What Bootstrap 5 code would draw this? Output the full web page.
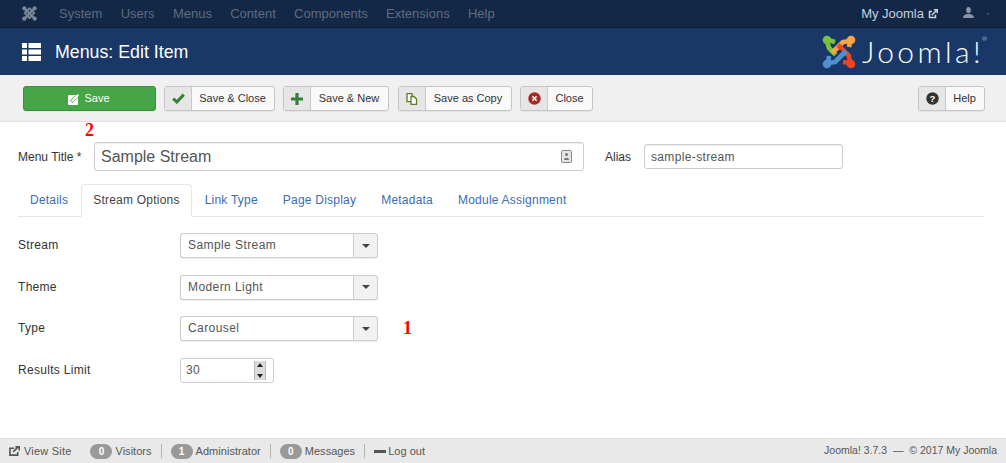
<!DOCTYPE html>
<html lang="en">
<head>
<meta charset="utf-8">
<title>Menus: Edit Item</title>
<link href="https://cdn.jsdelivr.net/npm/bootstrap@5.3.0/dist/css/bootstrap.min.css" rel="stylesheet">
<style>
html,body{height:100%;overflow:hidden}
body{font-family:"Liberation Sans",Arial,sans-serif;font-size:12px;color:#333;background:#fff;position:relative;display:flex;flex-direction:column}
.topbar{height:28px;background:#132746;border-bottom:1px solid #0d1c33;padding-left:22px;flex:none}
.topbar a{color:#5f6c80;font-size:13px;text-decoration:none;line-height:27px}
.topnav{gap:18.3px;margin-left:22px}
.mysite{color:#c8d1dd!important}
.usericon{margin-left:25px;margin-bottom:3px}
.usercaret{margin:0 16px 0 12px;border-top:2px solid #44516a;border-left:2.5px solid transparent;border-right:2.5px solid transparent;display:block}
.headbar{height:47px;background:#1a3867;color:#fff;padding-left:22px;padding-right:22px;flex:none}
.headbar h1{font-size:17.8px;font-weight:400;margin:1px 0 0 14px;line-height:47px}
.wordmark{font-family:Lato,"Liberation Sans",sans-serif;font-weight:300;font-size:30px;color:#fff;line-height:47px;margin-left:6px;letter-spacing:3.4px;position:relative}
.wordmark sup{font-size:6px;position:absolute;top:11px;right:-3px;letter-spacing:0}
.toolrow{height:47px;background:#f0f0f0;border-bottom:1px solid #e1e1e1;padding:11px 21px 0 23px;gap:8px;flex:none}
.tbtn{height:25px;padding:0;border:1px solid #c5c5c5;border-radius:3px;background:#f9f9f9;color:#333;font-size:11px;display:inline-flex;align-items:stretch;box-shadow:0 1px 1px rgba(0,0,0,.05)}
.tbtn:hover{background:#f9f9f9}
.ticon{width:27px;background:#e6e6e6;border-right:1px solid #c9c9c9;display:flex;align-items:center;justify-content:center;border-radius:2px 0 0 2px;flex:none}
.tlabel{display:flex;align-items:center;justify-content:center;flex:1;padding-right:1px}
.savebtn{width:133px;background:#46a546;border-color:#3b8f3b;color:#fff;justify-content:center;align-items:center;gap:4px;padding-right:1px}
.savebtn:hover{background:#46a546;color:#fff}
.w-sc{width:111px}.w-sn{width:106px}.w-sa{width:114px;margin-left:1px}.w-cl{width:73px}.w-he{width:67px}
.formwrap{padding:20px 22px 0 18px;flex:1 1 auto;min-height:0}
.toprow{height:29px;margin-bottom:13px}
.lbl-title{width:76px;flex:none}
.titlebox{width:490px;height:29px;flex:none;position:relative}
.titlebox input{height:29px;font-size:16px;padding:0 6px;border:1px solid #ccc;border-radius:3px;color:#555;font-family:inherit;box-shadow:inset 0 1px 1px rgba(0,0,0,.075)}
.titlebox svg{position:absolute;right:12px;top:8px}
.lbl-alias{margin-left:21px;width:39px;flex:none}
.aliasbox{width:199px;height:25px;font-size:12px;letter-spacing:.35px;padding:0 6px;border:1px solid #ccc;border-radius:3px;color:#555;font-family:inherit;box-shadow:inset 0 1px 1px rgba(0,0,0,.075)}
.tabline{border-bottom:1px solid #e6e6e6;height:33px;gap:0;--bs-nav-tabs-border-color:#e6e6e6}
.tabline .nav-link{font-size:12px;letter-spacing:.22px;color:#3b6cb4;padding:0 11px;height:33px;line-height:30px;border-radius:4px 4px 0 0;margin-right:1px}
.tabline .nav-link.active{color:#444;border-color:#e6e6e6 #e6e6e6 #fff}
.fieldrow{height:25px;margin-top:16.67px}
.tabline + .fieldrow{margin-top:16px}
.fieldlbl{width:162px;flex:none;font-size:12px;letter-spacing:.3px;margin-top:-1px}
.combo{width:198px;height:25px;flex:none}
.comboval{border:1px solid #ccc;border-right:0;border-radius:3px 0 0 3px;flex:1;padding:0 7px;line-height:23px;color:#555;letter-spacing:.42px;background:#fff;box-shadow:0 1px 1px rgba(0,0,0,.08)}
.combocaret{width:25px;background:#f2f2f2;border:1px solid #ccc;border-radius:0 3px 3px 0;display:flex;align-items:center;justify-content:center;box-shadow:0 1px 1px rgba(0,0,0,.08)}
.combocaret i{border-top:4px solid #444;border-left:4px solid transparent;border-right:4px solid transparent;display:block}
.numbox{width:94px;height:25px;border:1px solid #ccc;border-radius:3px;padding:0 7px 0 5px;color:#555;letter-spacing:.3px}
.spin{width:12px;height:19px;flex:none;background:#dcdcdc;display:flex;flex-direction:column;justify-content:space-between;align-items:center;padding:2px 0;border:1px solid #bbb;border-width:0 1px}
.spin b{display:block;border-left:3px solid transparent;border-right:3px solid transparent}
.spin b:first-child{border-bottom:4px solid #222}
.spin b:last-child{border-top:4px solid #222}
.footbar{height:25px;background:#e9e9e9;border-top:1px solid #dcdcdc;flex:none;font-size:11px;padding:0 9px 0 9px;color:#555;letter-spacing:.03px}
.footbar a{color:#555;text-decoration:none}
.viewsite{letter-spacing:.2px}
.cnt{background:#999;color:#fff;font-size:10px;font-weight:700;border-radius:9px;width:22px;height:15px;line-height:15px;text-align:center;padding:0;margin-right:3px;letter-spacing:0}
.sepbar{width:1px;height:14px;background:#b5b5b5;margin:0 9px}
.gapfirst{width:19px;flex:none}
.logoutdash{width:12px;height:3px;background:#555;margin-right:2px}
.foot-right{font-size:10.5px;letter-spacing:0;color:#555}
.anno{position:absolute;color:#f00;font-family:"Liberation Serif",serif;font-weight:700;line-height:1}
.anno2{left:85px;top:121px;font-size:18px}
.anno1{left:403px;top:319px;font-size:18px}
</style>
</head>
<body>
<nav class="topbar d-flex align-items-center">
  <svg width="15" height="15" viewBox="0 0 32 32" fill="none" stroke="#7b8798" stroke-width="5"><path d="M7 7 L25 25M25 7 L7 25"/><circle cx="5" cy="5" r="4.5" fill="#7b8798" stroke="none"/><circle cx="27" cy="5" r="4.5" fill="#7b8798" stroke="none"/><circle cx="5" cy="27" r="4.5" fill="#7b8798" stroke="none"/><circle cx="27" cy="27" r="4.5" fill="#7b8798" stroke="none"/><path d="M6 15 L16 5 L26 15 L16 26Z" stroke-width="4"/></svg>
  <div class="d-flex topnav">
    <a href="#">System</a><a href="#">Users</a><a href="#">Menus</a><a href="#">Content</a><a href="#">Components</a><a href="#">Extensions</a><a href="#">Help</a>
  </div>
  <div class="ms-auto d-flex align-items-center">
    <a href="#" class="mysite d-flex align-items-center">My Joomla<svg class="ms-1" width="10" height="10" viewBox="0 0 12 12" fill="none" stroke="#c8d1dd" stroke-width="1.8"><path d="M9 7v3.2H1.800V3H5"/><path d="M4.500 7.500 10.500 1.500M7 1h4.200v4.200"/></svg></a>
    <svg width="11" height="11" viewBox="0 0 12 12" fill="#8a94a5" class="usericon"><ellipse cx="6" cy="3.400" rx="2.600" ry="3.400"/><path d="M0 12c0-3 2-3.600 4.500-4.500h3C10 8.400 12 9 12 12z"/></svg>
    <span class="usercaret"></span>
  </div>
</nav>
<header class="headbar d-flex align-items-center">
  <svg width="19" height="18" viewBox="0 0 19 18" fill="#fff"><path d="M0 0h5v5H0zM6.500 0H19v5H6.500zM0 6.500h5v5H0zM6.500 6.500H19v5H6.500zM0 13h5v5H0zM6.500 13H19v5H6.500z"/></svg>
  <h1>Menus: Edit Item</h1>
  <div class="ms-auto d-flex align-items-center">
    <svg width="34" height="34" viewBox="0 0 34 34" fill="none" stroke-width="4.600" stroke-linejoin="round">
      <g stroke="#7ac143"><path d="M5 6 L7 13 L17 23"/><path d="M6 5 L13 7"/></g><circle cx="5" cy="5" r="4.300" fill="#7ac143"/>
      <g stroke="#f9a541"><path d="M28 6 L21 7 L10 18"/><path d="M28 6 L27 12"/></g><circle cx="29" cy="5" r="4.300" fill="#f9a541"/>
      <g stroke="#f44321"><path d="M28 28 L27 21 L16 10"/><path d="M28 28 L21 27"/></g><circle cx="29" cy="29" r="4.300" fill="#f44321"/>
      <g stroke="#1a3867" stroke-width="6.500"><path d="M12 26 L21 17"/></g>
      <g stroke="#5091cd"><path d="M6 28 L13 27 L24 16"/><path d="M6 28 L7 21"/></g><circle cx="5" cy="29" r="4.300" fill="#5091cd"/>
    </svg>
    <span class="wordmark">Joomla!<sup>®</sup></span>
  </div>
</header>
<div class="toolrow d-flex">
  <button class="btn tbtn savebtn"><svg width="12" height="12" viewBox="0 0 12 12"><rect x="0" y="2" width="10" height="10" rx="1" fill="#fff"/><path d="M3 9 8.500 3.500" stroke="#46a546" stroke-width="3.200" fill="none"/><path d="M3 9.200l.4-2L9.500 1l1.600 1.600L5 8.800z" fill="#fff"/></svg><span>Save</span></button>
  <button class="btn tbtn w-sc"><span class="ticon"><svg width="13" height="11" viewBox="0 0 13 11" fill="none" stroke="#378137" stroke-width="3"><path d="M1.200 5.500 4.800 9 11.800 1.600"/></svg></span><span class="tlabel">Save &amp; Close</span></button>
  <button class="btn tbtn w-sn"><span class="ticon"><svg width="12" height="12" viewBox="0 0 12 12" fill="#378137"><path d="M4.400 0h3.200v4.400H12v3.200H7.600V12H4.400V7.600H0V4.400h4.400z"/></svg></span><span class="tlabel">Save &amp; New</span></button>
  <button class="btn tbtn w-sa"><span class="ticon"><svg width="12" height="12" viewBox="0 0 12 12" fill="#fff" stroke="#5b7a22" stroke-width="1.300"><path d="M1 .7h5v8H1z"/><path d="M5 3.500h3l2.500 2.500v5.300H5z"/></svg></span><span class="tlabel">Save as Copy</span></button>
  <button class="btn tbtn w-cl"><span class="ticon"><svg width="13" height="13" viewBox="0 0 13 13"><circle cx="6.500" cy="6.500" r="6.200" fill="#a72b23"/><path d="M4.400 4.400l4.200 4.200M8.600 4.400l-4.200 4.200" stroke="#eee" stroke-width="1.600"/></svg></span><span class="tlabel">Close</span></button>
  <button class="btn tbtn w-he ms-auto"><span class="ticon"><svg width="13" height="13" viewBox="0 0 13 13"><circle cx="6.500" cy="6.500" r="6.200" fill="#333"/><text x="6.500" y="10" text-anchor="middle" font-size="9.500" font-weight="700" fill="#fff" font-family="Liberation Sans">?</text></svg></span><span class="tlabel">Help</span></button>
</div>
<main class="formwrap">
  <div class="toprow d-flex align-items-center">
    <label class="lbl-title" for="t1">Menu Title *</label>
    <div class="titlebox">
      <input id="t1" class="form-control" value="Sample Stream">
      <svg width="11" height="13" viewBox="0 0 11 13"><rect x=".5" y=".5" width="10" height="12" rx="1" fill="#e4e4e4" stroke="#888"/><circle cx="5.500" cy="4.500" r="1.500" fill="#777"/><path d="M3 10c0-3 5-3 5 0z" fill="#777"/></svg>
    </div>
    <label class="lbl-alias" for="t2">Alias</label>
    <input id="t2" class="form-control aliasbox" value="sample-stream">
  </div>
  <ul class="nav nav-tabs tabline">
    <li class="nav-item"><a class="nav-link" href="#">Details</a></li>
    <li class="nav-item"><a class="nav-link active" href="#">Stream Options</a></li>
    <li class="nav-item"><a class="nav-link" href="#">Link Type</a></li>
    <li class="nav-item"><a class="nav-link" href="#">Page Display</a></li>
    <li class="nav-item"><a class="nav-link" href="#">Metadata</a></li>
    <li class="nav-item"><a class="nav-link" href="#">Module Assignment</a></li>
  </ul>
  <div class="d-flex align-items-center fieldrow"><span class="fieldlbl">Stream</span><div class="combo d-flex"><span class="comboval">Sample Stream</span><span class="combocaret"><i></i></span></div></div>
  <div class="d-flex align-items-center fieldrow"><span class="fieldlbl">Theme</span><div class="combo d-flex"><span class="comboval">Modern Light</span><span class="combocaret"><i></i></span></div></div>
  <div class="d-flex align-items-center fieldrow"><span class="fieldlbl">Type</span><div class="combo d-flex"><span class="comboval">Carousel</span><span class="combocaret"><i></i></span></div></div>
  <div class="d-flex align-items-center fieldrow"><span class="fieldlbl">Results Limit</span><div class="numbox d-flex align-items-center justify-content-between"><span>30</span><span class="spin"><b></b><b></b></span></div></div>
</main>
<footer class="footbar d-flex align-items-center">
  <a href="#" class="d-flex align-items-center viewsite"><svg class="me-1" width="11" height="10" viewBox="0 0 12 11" fill="none" stroke="#555" stroke-width="1.800"><path d="M9.500 6.500v3.600H1V2.500h4.500"/><path d="M4.500 6.500 10 1M7 .8h4.200V5"/></svg>View Site</a>
  <span class="gapfirst"></span>
  <span class="badge cnt">0</span><span>Visitors</span><span class="sepbar"></span>
  <span class="badge cnt">1</span><span>Administrator</span><span class="sepbar"></span>
  <span class="badge cnt">0</span><span>Messages</span><span class="sepbar"></span>
  <a href="#" class="d-flex align-items-center"><span class="d-block logoutdash"></span>Log out</a>
  <span class="ms-auto foot-right">Joomla! 3.7.3 &nbsp;— &nbsp;© 2017 My Joomla</span>
</footer>
<span class="anno anno2">2</span>
<span class="anno anno1">1</span>
<script src="https://cdn.jsdelivr.net/npm/bootstrap@5.3.0/dist/js/bootstrap.bundle.min.js"></script>
</body>
</html>
